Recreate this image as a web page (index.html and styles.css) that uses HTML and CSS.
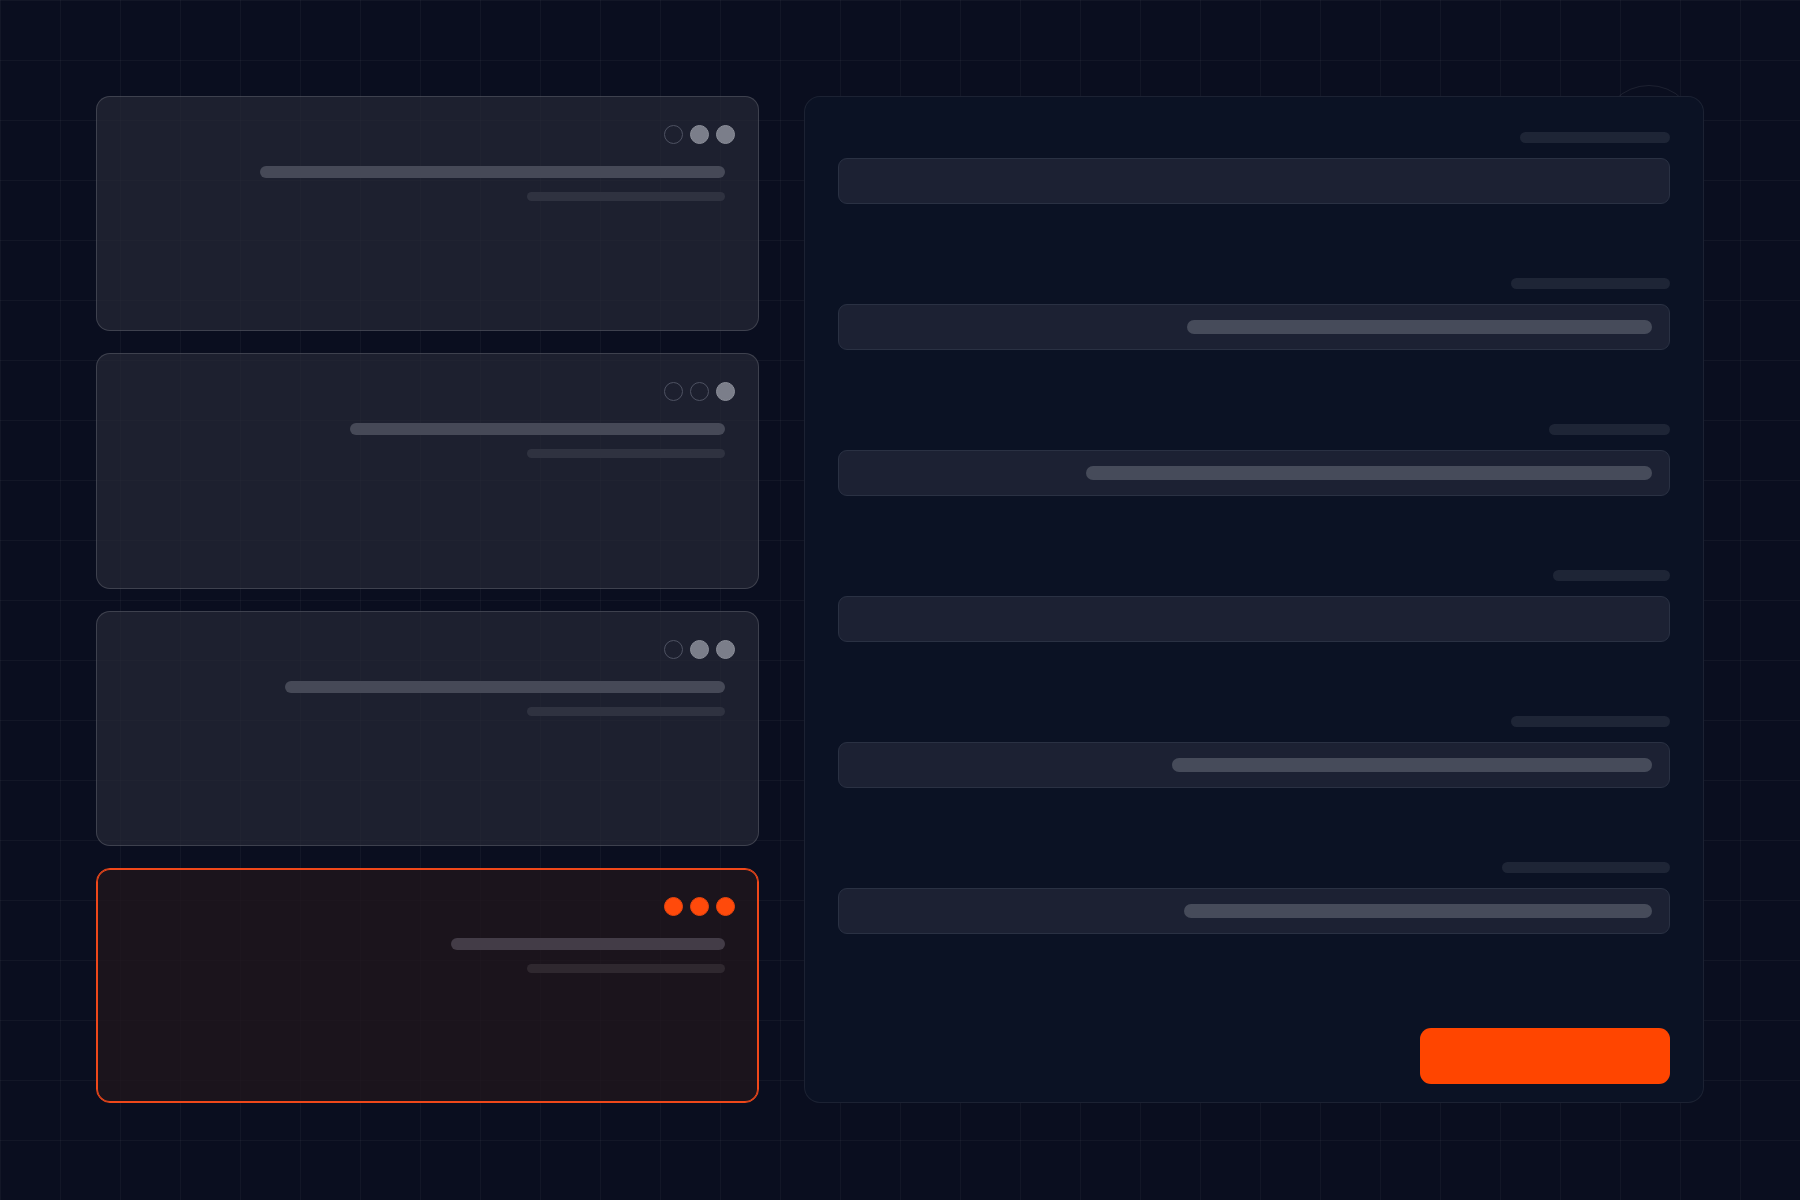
FILE: index.html
```html
<!DOCTYPE html>
<html lang="en">
<head>
<meta charset="utf-8">
<title>Form cards</title>
<link rel="stylesheet" href="styles.css">
</head>
<body>
<div class="deco-ring"></div>
<main class="layout">
  <section class="cards">
    <article class="card">
      <div class="dots"><span class="dot"></span><span class="dot on"></span><span class="dot on"></span></div>
      <div class="line main" style="width:465px"></div>
      <div class="line sub"></div>
    </article>
    <article class="card">
      <div class="dots"><span class="dot"></span><span class="dot"></span><span class="dot on"></span></div>
      <div class="line main" style="width:375px"></div>
      <div class="line sub"></div>
    </article>
    <article class="card">
      <div class="dots"><span class="dot"></span><span class="dot on"></span><span class="dot on"></span></div>
      <div class="line main" style="width:440px"></div>
      <div class="line sub"></div>
    </article>
    <article class="card active">
      <div class="dots"><span class="dot hot"></span><span class="dot hot"></span><span class="dot hot"></span></div>
      <div class="line main" style="width:274px"></div>
      <div class="line sub"></div>
    </article>
  </section>
  <section class="panel">
    <div class="field">
      <div class="label" style="width:150px"></div>
      <div class="input"></div>
    </div>
    <div class="field">
      <div class="label" style="width:159px"></div>
      <div class="input"><div class="value" style="width:465px"></div></div>
    </div>
    <div class="field">
      <div class="label" style="width:121px"></div>
      <div class="input"><div class="value" style="width:566px"></div></div>
    </div>
    <div class="field">
      <div class="label" style="width:117px"></div>
      <div class="input"></div>
    </div>
    <div class="field">
      <div class="label" style="width:159px"></div>
      <div class="input"><div class="value" style="width:480px"></div></div>
    </div>
    <div class="field">
      <div class="label" style="width:168px"></div>
      <div class="input"><div class="value" style="width:468px"></div></div>
    </div>
    <div class="button"></div>
  </section>
</main>
</body>
</html>
```
FILE: styles.css
```css
html, body {
  margin: 0;
  padding: 0;
}
body {
  position: relative;
  width: 1800px;
  height: 1200px;
  overflow: hidden;
  font-family: "Inter", "Liberation Sans", sans-serif;
  background-color: #0a0e1f;
  background-image:
    linear-gradient(to right, rgba(255,255,255,0.035) 1px, transparent 1px),
    linear-gradient(to bottom, rgba(255,255,255,0.035) 1px, transparent 1px);
  background-size: 60px 60px;
}
.deco-ring {
  position: absolute;
  left: 1601px;
  top: 85px;
  width: 96px;
  height: 96px;
  border-radius: 50%;
  border: 1px solid rgba(255,255,255,0.08);
  box-sizing: border-box;
  z-index: 0;
}
.layout {
  position: relative;
  z-index: 1;
  display: flex;
  gap: 45px;
  padding: 96px 0 0 96px;
}
.cards {
  width: 663px;
  height: 1007px;
  display: flex;
  flex-direction: column;
  gap: 22px;
}
.card {
  flex: 1;
  box-sizing: border-box;
  border: 1px solid rgba(255,255,255,0.15);
  border-radius: 14px;
  background: rgba(37,40,54,0.72);
  padding: 28px 33px 0 0;
  display: flex;
  flex-direction: column;
  align-items: flex-end;
}
.card.active {
  border-color: #f0481a;
  box-shadow: inset 0 0 0 1px #f0481a;
  background: rgba(32,22,28,0.78);
}
.dots {
  display: flex;
  gap: 7px;
  margin-right: -10px;
}
.dot {
  width: 19px;
  height: 19px;
  box-sizing: border-box;
  border-radius: 50%;
  border: 1.5px solid #4e5262;
}
.dot.on {
  background: #7b7e8a;
  border: 1px solid #8b8e99;
}
.dot.hot {
  background: #ff4a0b;
  border: 1px solid #e8450e;
}
.line {
  border-radius: 6px;
}
.line.main {
  height: 12px;
  margin-top: 22px;
  background: #464957;
}
.line.sub {
  width: 198px;
  height: 9px;
  margin-top: 14px;
  background: #2f3240;
}
.card.active .line.main { background: #433c47; }
.card.active .line.sub { background: #2f282f; }

.panel {
  width: 900px;
  height: 1007px;
  box-sizing: border-box;
  border: 1px solid rgba(255,255,255,0.07);
  border-radius: 16px;
  background: #0b1224;
  padding: 35px 33px 18px 33px;
  display: flex;
  flex-direction: column;
  gap: 74px;
}
.field {
  display: flex;
  flex-direction: column;
  align-items: flex-end;
  gap: 15px;
}
.label {
  height: 11px;
  border-radius: 6px;
  background: #1e2536;
}
.input {
  width: 100%;
  height: 46px;
  box-sizing: border-box;
  background: #1c2133;
  border: 1px solid #2a3143;
  border-radius: 9px;
  display: flex;
  align-items: center;
  justify-content: flex-end;
  padding-right: 17px;
}
.value {
  height: 14px;
  border-radius: 7px;
  background: #464b5a;
}
.button {
  margin-top: auto;
  align-self: flex-end;
  width: 250px;
  height: 56px;
  border-radius: 11px;
  background: #ff4500;
}
```
